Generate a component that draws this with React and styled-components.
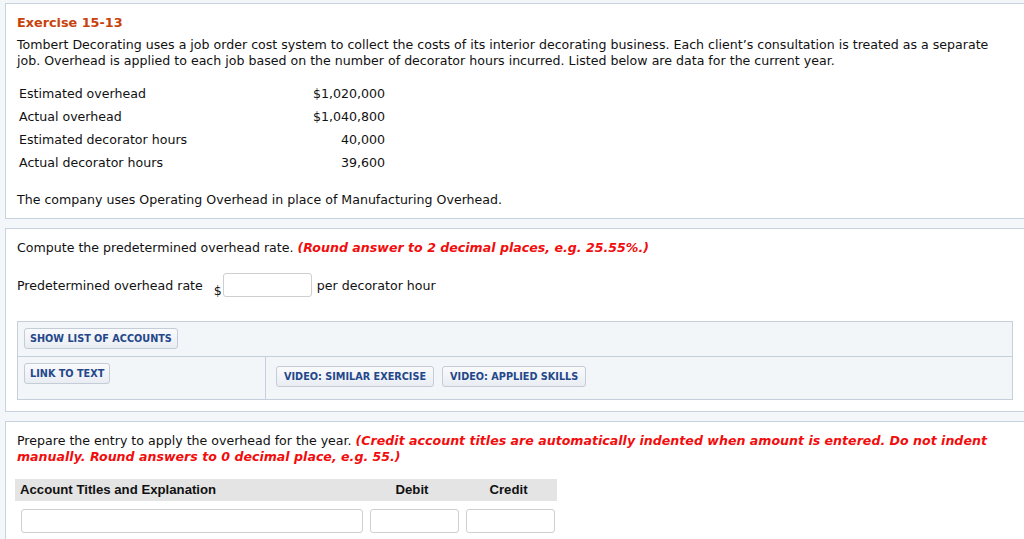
import React from "react";
import styled, { createGlobalStyle } from "styled-components";

const GlobalStyle = createGlobalStyle`
  html, body {
    margin: 0;
    padding: 0;
    background: #f4f7fa;
    overflow: hidden;
  }
  body {
    font-family: "DejaVu Sans", Verdana, sans-serif;
    font-size: 12.6px;
    color: #111;
  }
`;

const Page = styled.div({
  display: "flex",
  flexDirection: "column",
  gap: "9px",
  padding: "3px 0 0 5px",
  width: "1040px",
});

const Panel = styled.section({
  background: "#ffffff",
  border: "1px solid #c8d2de",
  padding: "11px 11px 10px 11px",
  "> p": {
    margin: 0,
    lineHeight: "16px",
  },
});

const Title = styled.h1({
  color: "#c8420c",
  fontSize: "12.8px",
  fontWeight: "bold",
  margin: "0 0 6px 0",
  lineHeight: "16px",
});

const Body = styled.p({
  width: "990px",
});

const DataTable = styled.table({
  borderCollapse: "collapse",
  margin: "13px 0 18px 0",
  " td": {
    padding: "0 0 0 2px",
    height: "23px",
  },
  " td:last-child": {
    textAlign: "right",
    width: "190px",
  },
  " td:first-child": {
    width: "174px",
  },
});

const Instruction = styled.p({
  width: "990px",
  " em": {
    color: "#f20d0d",
    fontWeight: "bold",
  },
});

const RateRow = styled.div({
  display: "flex",
  alignItems: "center",
  margin: "17px 0 24px 0",
});

const RateLabel = styled.span({
  marginRight: "11px",
});

const Dollar = styled.span({
  alignSelf: "flex-end",
  marginRight: "1px",
  lineHeight: "13px",
});

const TextBox = styled.input({
  boxSizing: "border-box",
  width: (p) => p.$w,
  height: "24px",
  border: "1px solid #cfcfcf",
  borderRadius: "3px",
  background: "#fff",
  margin: 0,
});

const RateBox = styled(TextBox)`
  width: 89px;
  margin-right: 5px;
`;

const Toolbar = styled.div({
  background: "#f3f6f9",
  border: "1px solid #c6d0dc",
  marginBottom: "1px",
  width: "994px",
});

const ToolRow = styled.div({
  display: "flex",
  borderTop: (p) => (p.$divider ? "1px solid #c6d0dc" : "none"),
  minHeight: (p) => p.$h,
});

const ToolCell = styled.div({
  display: "flex",
  gap: "8px",
  alignItems: "flex-start",
  padding: (p) => p.$pad,
  width: (p) => p.$w || "auto",
  borderRight: (p) => (p.$split ? "1px solid #c6d0dc" : "none"),
  boxSizing: "border-box",
});

const ToolButton = styled.button({
  fontFamily: '"DejaVu Sans", Verdana, sans-serif',
  fontSize: "9.7px",
  fontWeight: "bold",
  color: "#24478a",
  background: "linear-gradient(#f9fafc, #e9edf2)",
  border: "1px solid #c3ccd7",
  borderRadius: "3px",
  padding: (p) => (p.$wide ? "0 7px" : "0 5px"),
  height: "21px",
  cursor: "pointer",
});

const EntryTable = styled.div({
  display: "grid",
  gridTemplateColumns: "349px 96px 97px",
  width: "542px",
  marginTop: "14px",
  marginLeft: "-2px",
});

const HeadCell = styled.div({
  background: "#e4e4e4",
  fontFamily: '"Liberation Sans", Arial, sans-serif',
  fontWeight: "bold",
  fontSize: "13.2px",
  height: "22px",
  lineHeight: "22px",
  paddingLeft: (p) => (p.$left ? "5px" : 0),
  textAlign: (p) => (p.$left ? "left" : "center"),
});

const InputCell = styled.div({
  padding: "8px 0 0 6px",
});

const data = [
  ["Estimated overhead", "$1,020,000"],
  ["Actual overhead", "$1,040,800"],
  ["Estimated decorator hours", "40,000"],
  ["Actual decorator hours", "39,600"],
];

export default function App() {
  return (
    <>
      <GlobalStyle />
      <Page>
        <Panel>
          <Title>Exercise 15-13</Title>
          <Body>
            Tombert Decorating uses a job order cost system to collect the
            costs of its interior decorating business. Each client’s
            consultation is treated as a separate job. Overhead is applied to
            each job based on the number of decorator hours incurred. Listed
            below are data for the current year.
          </Body>
          <DataTable>
            <tbody>
              {data.map(([label, value]) => (
                <tr key={label}>
                  <td>{label}</td>
                  <td>{value}</td>
                </tr>
              ))}
            </tbody>
          </DataTable>
          <p>
            The company uses Operating Overhead in place of Manufacturing
            Overhead.
          </p>
        </Panel>

        <Panel>
          <Instruction>
            Compute the predetermined overhead rate.{" "}
            <em>(Round answer to 2 decimal places, e.g. 25.55%.)</em>
          </Instruction>
          <RateRow>
            <RateLabel>Predetermined overhead rate</RateLabel>
            <Dollar>$</Dollar>
            <RateBox type="text" />
            <span>per decorator hour</span>
          </RateRow>
          <Toolbar>
            <ToolRow $h="34px">
              <ToolCell $pad="6px 6px">
                <ToolButton>SHOW LIST OF ACCOUNTS</ToolButton>
              </ToolCell>
            </ToolRow>
            <ToolRow $divider $h="42px">
              <ToolCell $pad="6px 6px" $w="248px" $split>
                <ToolButton>LINK TO TEXT</ToolButton>
              </ToolCell>
              <ToolCell $pad="9px 10px">
                <ToolButton $wide>VIDEO: SIMILAR EXERCISE</ToolButton>
                <ToolButton $wide>VIDEO: APPLIED SKILLS</ToolButton>
              </ToolCell>
            </ToolRow>
          </Toolbar>
        </Panel>

        <Panel>
          <Instruction>
            Prepare the entry to apply the overhead for the year.{" "}
            <em>
              (Credit account titles are automatically indented when amount is
              entered. Do not indent manually. Round answers to 0 decimal
              place, e.g. 55.)
            </em>
          </Instruction>
          <EntryTable>
            <HeadCell $left>Account Titles and Explanation</HeadCell>
            <HeadCell>Debit</HeadCell>
            <HeadCell>Credit</HeadCell>
            <InputCell>
              <TextBox type="text" $w="342px" />
            </InputCell>
            <InputCell>
              <TextBox type="text" $w="89px" />
            </InputCell>
            <InputCell>
              <TextBox type="text" $w="89px" />
            </InputCell>
          </EntryTable>
        </Panel>
      </Page>
    </>
  );
}
